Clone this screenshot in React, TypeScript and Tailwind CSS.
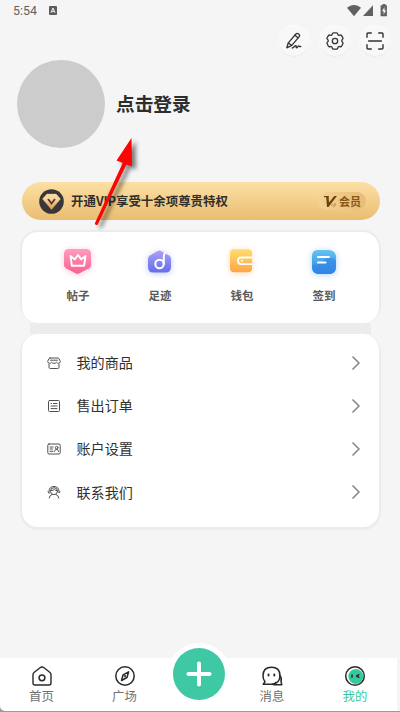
import { ReactNode } from "react";

const stroke = {
  fill: "none",
  stroke: "currentColor",
  strokeLinecap: "round" as const,
  strokeLinejoin: "round" as const,
};

function StatusBar() {
  return (
    <div className="flex h-6 items-start justify-between pl-[13px] pr-3 text-[#626262]">
      <div className="flex items-center gap-3 pt-[2px]">
        <span className="font-[Roboto] text-[12.4px] leading-[17px]">5:54</span>
        <svg width="8" height="9" viewBox="0 0 8 9">
          <rect width="8" height="9" rx="1" fill="#5c5c5c" />
          <path d="M2 6.8 4 2l2 4.8M2.8 5.3h2.4" fill="none" stroke="#f5f5f5" strokeWidth="1" />
        </svg>
      </div>
      <svg className="mt-1" width="41" height="13" viewBox="0 0 41 13" fill="#616161">
        <path d="M0 3.8C4-.1 10-.1 14 3.8L7 12.3Z" />
        <path d="M26 1.2V12H16Z" />
        <path d="M35.5 0h3v1.3h1.400v11H33.600v-11h1.900Z" />
        <path d="M37.500 2.900 35 7.200h1.600v3.300L39.100 6.200h-1.600Z" fill="#f5f5f5" />
      </svg>
    </div>
  );
}

function RoundButton({ children }: { children: ReactNode }) {
  return (
    <button className="flex size-[30px] items-center justify-center rounded-full bg-[#f8f8f8] text-[#333] shadow-[0_1px_1px_#e8e6f6,0_0_0_1px_#fcfcfc]">
      {children}
    </button>
  );
}

function TopActions() {
  return (
    <div className="flex justify-end gap-[10.5px] pr-[10px] pt-[2px]">
      <RoundButton>
        <svg width="18" height="18" viewBox="0 0 18 18" {...stroke} strokeWidth="1.300">
          <path d="M1.800 15.800 3.300 10.800 10.900 2q1.300-1.200 2.800 0 1.500 1.300.5 2.700L6.800 13.300Z" />
          <path d="m10 3.200 3.200 2.700M3.500 11l3 2.300M7.300 16c1.500-.2 2.200-2.400 3.500-2.400 1.200 0-.4 2.300.8 2.200.9 0 1.400-1.900 2.200-1.900.7 0 .5.900 2 .6" />
        </svg>
      </RoundButton>
      <RoundButton>
        <svg width="20" height="20" viewBox="0 0 20 20" {...stroke} strokeWidth="1.300">
          <path d="M7.200 3.100Q7.400 1.800 8.500 1.800h3q1.100 0 1.300 1.300.3 1.500 1.900 1.100 1.300-.5 1.900.5l1.300 2.200q.5.900-.5 1.700-1.300 1.200 0 2.500 1 .8.500 1.700l-1.300 2.300q-.6 1-1.900.5-1.600-.4-1.900 1.200-.2 1.300-1.300 1.300h-3q-1.100 0-1.300-1.300-.3-1.600-1.900-1.200-1.300.5-1.900-.5l-1.300-2.300q-.5-.9.500-1.700 1.300-1.300 0-2.500-1-.8-.5-1.700l1.300-2.200q.6-1 1.900-.5 1.600.4 1.900-1.100Z" />
          <circle cx="10" cy="10" r="2.700" />
        </svg>
      </RoundButton>
      <RoundButton>
        <svg width="18" height="18" viewBox="0 0 18 18" {...stroke} strokeWidth="1.400">
          <path d="M1 5.300V2q0-1 1-1h3.300M12.700 1H16q1 0 1 1v3.300M17 12.700V16q0 1-1 1h-3.300M5.300 17H2q-1 0-1-1v-3.300M2.600 9h12.800" />
        </svg>
      </RoundButton>
    </div>
  );
}

function VipBanner() {
  return (
    <div className="ml-[21.500px] mr-[20.500px] flex h-[38px] items-center rounded-full bg-linear-to-b from-[#fde0a5] to-[#e9bd70] pl-[17.500px] pr-[13.500px]">
      <svg width="25" height="25" viewBox="0 0 25 25">
        <defs>
          <linearGradient id="gem" x2="0" y2="1">
            <stop stopColor="#fff0d1" />
            <stop offset="1" stopColor="#dc9b54" />
          </linearGradient>
        </defs>
        <circle cx="12.500" cy="12.500" r="12.300" fill="#373737" />
        <path d="M8 5h9l4.500 5-9 10.500L3.500 10Z" fill="url(#gem)" stroke="#d49a5d" strokeWidth=".5" />
        <path d="M4 9.800 8 5h9l4 4.800H4Z" fill="#f7d6a3" />
        <path d="m9 10 3.500 4.500L16 10" fill="none" stroke="#593b22" strokeWidth="1.900" />
      </svg>
      <span className="ml-[7px] text-[12.450px] font-bold whitespace-nowrap text-[#302f2d]">
        开通VIP享受十余项尊贵特权
      </span>
      <span className="ml-auto flex h-[18px] w-[48px] items-center rounded-full bg-linear-to-r from-[#f4d294] to-[#e7bd76] pl-[6px] text-[#855815]">
        <svg width="14" height="13" viewBox="0 0 14 13">
          <path d="M0 1h5L4.700 2l.3 5.500L10.300 1H13l-.8 1L4.500 12H3L2.200 2.200H0Z" fill="#6b4309" />
          <path d="M8 8.500v2.800M10 12.500V8.800h1.500q1 1.700-1.500 1.700" fill="none" stroke="#b78b48" strokeWidth=".8" />
        </svg>
        <span className="ml-px text-[11px] font-bold whitespace-nowrap">会员</span>
      </span>
    </div>
  );
}

function PostIcon() {
  return (
    <svg className="overflow-visible drop-shadow-[0_1px_3px_#ff8eb180]" width="28" height="28" viewBox="0 0 28 28">
      <defs>
        <linearGradient id="pink" x2="0" y2="1">
          <stop stopColor="#ff9dbf" />
          <stop offset="1" stopColor="#fb5e8f" />
        </linearGradient>
      </defs>
      <path d="M5 2h17q5 0 5 5V18q0 2-2 3.200l-9.500 5q-2 1-4 0L2 21.200Q0 20 0 18V7q0-5 5-5Z" fill="url(#pink)" />
      <path d="m6.500 9 1.400 9.800h12.200L21.500 9l-4.200 3.300L14 8l-3.300 4.300Z" fill="none" stroke="#fff" strokeWidth="1.900" strokeLinejoin="round" />
    </svg>
  );
}

function FootprintIcon() {
  return (
    <svg className="overflow-visible drop-shadow-[0_1px_3px_#7a80f070]" width="28" height="28" viewBox="0 0 28 28">
      <defs>
        <linearGradient id="purple" x2="0" y2="1">
          <stop stopColor="#aaa0fa" />
          <stop offset="1" stopColor="#656de9" />
        </linearGradient>
      </defs>
      <path d="m11.800 4 q1.500-.8 3 0l8.200 4.600q2 1.200 2 3.400v8q0 5.500-5.500 5.500h-12Q2 25.500 2 20v-8q0-2.200 2-3.400Z" fill="url(#purple)" />
      <circle cx="13.500" cy="17" r="4.200" fill="none" stroke="#fff" strokeWidth="2" />
      <path d="M17.800 17V9.500q0-2.500 1.300-3.600" fill="none" stroke="#fff" strokeWidth="2" strokeLinecap="round" />
    </svg>
  );
}

function WalletIcon() {
  return (
    <svg className="overflow-visible drop-shadow-[0_1px_3px_#ffad6070]" width="28" height="28" viewBox="0 0 28 28">
      <defs>
        <linearGradient id="orange" x2="0" y2="1">
          <stop stopColor="#ffdc70" />
          <stop offset="1" stopColor="#ffa646" />
        </linearGradient>
      </defs>
      <rect x="2" y="2.200" width="22" height="23" rx="4" fill="url(#orange)" />
      <path d="M24 10.500H13q-3 0-3 3.300t3 3.300h11" fill="none" stroke="#fff" strokeWidth="1.900" />
      <circle cx="14" cy="13.800" r="1" fill="#fff" />
    </svg>
  );
}

function SignIcon() {
  return (
    <svg className="overflow-visible drop-shadow-[0_1px_3px_#4a9bee70]" width="28" height="28" viewBox="0 0 28 28">
      <defs>
        <linearGradient id="blue" x2="0" y2="1">
          <stop stopColor="#62c4ef" />
          <stop offset="1" stopColor="#3284e4" />
        </linearGradient>
      </defs>
      <path d="M8 3h10q8 0 8 8v9q0 7-7 7H9q-7 0-7-7V9q0-6 6-6Z" fill="url(#blue)" />
      <path d="M2 18q9-1 11-4 4-6 13-1v7q0 7-7 7H9q-7 0-7-7Z" fill="#3183e6" opacity=".6" />
      <path d="M8 10h11M8 15.500h7.500" stroke="#fff" strokeWidth="2.100" strokeLinecap="round" />
    </svg>
  );
}

const shortcuts = [
  { label: "帖子", icon: <PostIcon /> },
  { label: "足迹", icon: <FootprintIcon /> },
  { label: "钱包", icon: <WalletIcon /> },
  { label: "签到", icon: <SignIcon /> },
];

const menu = [
  {
    label: "我的商品",
    icon: (
      <path d="M3 2h8q.8 0 1.200 1L13.300 5.300q0 1.900-1.700 2-1.200.1-2.100-1-1 1.200-2.500 1-1.400.2-2.400-1-.9 1.100-2.200 1Q.7 7.200.7 5.300L1.800 3Q2.200 2 3 2ZM2 8.200v3q0 1.300 1.300 1.300h7.400q1.300 0 1.300-1.300v-3M3.500 4.200h7" />
    ),
  },
  {
    label: "售出订单",
    icon: (
      <>
        <rect x="1.500" y="1.500" width="11" height="11" rx="1" />
        <path d="M4 4.500h.5M6.500 4.500H10M4 7h6M4 9.600h6" />
      </>
    ),
  },
  {
    label: "账户设置",
    icon: (
      <>
        <rect x=".8" y="2" width="12.400" height="10" rx="1.200" />
        <path d="M3 5h3M3 7h2.500M3 9.300h3M7.500 9.500 9 7.200h1.200l1.300 2.300" />
        <circle cx="9.600" cy="5.700" r="1.300" />
      </>
    ),
  },
  {
    label: "联系我们",
    icon: (
      <>
        <circle cx="7" cy="6.200" r="3.500" />
        <path d="M2 8V6.300Q2.300 1.500 7 1.500T12 6.300V8l1-1.500M2 8 1 6.500M3.800 5.500Q6.500 5.600 7.500 4.500q1 1.200 2.700 1.200M2.200 13q.3-2.700 2.800-3.600M11.800 13Q11.500 10.300 9 9.400" />
      </>
    ),
  },
];

function NavItem({ label, active, children }: { label: string; active?: boolean; children: ReactNode }) {
  return (
    <div className={`flex w-[50px] flex-col items-center pt-[7px] ${active ? "text-[#36c99f]" : "text-[#707070]"}`}>
      <svg className="text-[#292929]" width="22" height="22" viewBox="0 0 22 22" {...stroke} strokeWidth="1.500">
        {children}
      </svg>
      <span className="mt-px text-[12.400px] leading-[17px]">{label}</span>
    </div>
  );
}

function BottomNav() {
  return (
    <nav className="relative h-[54px] bg-linear-to-b from-[#f5f5f5] from-[98%] to-[#9b9b9b] to-[98%]">
      <div className="absolute left-[167px] -top-[15px] size-16 rounded-full bg-white" />
      <div className="absolute bottom-0 left-0 size-2 bg-[#9b9b9b]" />
      <div className="relative mr-[3px] flex h-[53px] rounded-bl-[5px] bg-white pl-[16.500px]">
        <NavItem label="首页">
          <path d="M3 7.500 9 2.700q2-1.500 4 0l6 4.800q1 .8 1 2V18q0 2-2 2H4q-2 0-2-2V9.500q0-1.200 1-2Z" strokeWidth="1.400" />
          <circle cx="11" cy="12.800" r="2.900" />
        </NavItem>
        <div className="ml-[33px]">
          <NavItem label="广场">
            <circle cx="11" cy="11" r="9.200" />
            <path d="M14.600 6.800 13 12.500l-5.500 3 1.600-5.700Z" />
            <circle cx="11" cy="11.200" r=".4" />
          </NavItem>
        </div>
        <div className="ml-[97.500px]">
          <NavItem label="消息">
            <path d="M2.200 19.300 4 16.800Q2 14.500 2 10.800 2 2.300 10.500 2.300T19 10.800q0 7.500-8 8.500Z" />
            <path d="M18.800 10.500q2.300 2.500 1.200 5.800l.8 3.500H15q-2 0-3.500-.6M14.500 17.500v2" />
            <path d="M7.500 9.500v1M13.300 9.500v1" strokeWidth="1.900" />
          </NavItem>
        </div>
        <div className="ml-[33px]">
          <NavItem label="我的" active>
            <circle cx="11" cy="11" r="9.300" fill="#fff" />
            <circle cx="11.800" cy="11.500" r="7.500" fill="#36c99f" stroke="none" />
            <path d="M8 10v2.200M14.800 9.700 12.700 11l2.100 1.300" />
          </NavItem>
        </div>
      </div>
      <button className="absolute left-[173px] -top-[10px] flex size-[52px] items-center justify-center rounded-full bg-[#3ec9a4]">
        <svg width="26" height="26" viewBox="0 0 26 26" stroke="#fff" strokeWidth="4" strokeLinecap="round">
          <path d="M13 2.500v21M2.500 13h21" />
        </svg>
      </button>
    </nav>
  );
}

function Arrow() {
  return (
    <svg className="pointer-events-none absolute left-[90px] top-[132px] overflow-visible drop-shadow-[4px_3px_2px_#00000080]" width="50" height="96" viewBox="0 0 50 96">
      <path d="M41.500 6 26.500 28.500 33 31 5.500 91.200 7.500 92.200 36.500 32.500 42 34.500Z" fill="#fb0505" />
      <path d="M6.500 91.500 34.500 31" stroke="#fb0505" strokeWidth="3" strokeLinecap="round" />
    </svg>
  );
}

export default function App() {
  return (
    <div className="relative flex h-[712px] w-[400px] flex-col overflow-hidden bg-[#f5f5f5] font-['Noto_Sans_CJK_SC',sans-serif]">
      <StatusBar />
      <TopActions />

      <div className="mt-1 flex items-center gap-[11px] pl-[17px]">
        <div className="size-[88px] rounded-full bg-[#ccc]" />
        <h1 className="relative -top-px text-[18.700px] font-bold text-[#2d2d2d]">点击登录</h1>
      </div>

      <div className="mt-[34px]">
        <VipBanner />
      </div>

      <main className="ml-5 mr-[19px] mt-[10px] flex flex-col">
        <section className="rounded-[18px] bg-[#ececec] px-[2px] pt-[2px]">
          <div className="flex h-[91px] rounded-[16px] bg-white pl-[15px] pr-[14px]">
            {shortcuts.map((item) => (
              <div key={item.label} className="flex flex-1 flex-col items-center pt-[15px]">
                {item.icon}
                <span className="mt-[11px] text-[11.500px] leading-[18px] font-bold text-[#5a5a5a]">{item.label}</span>
              </div>
            ))}
          </div>
        </section>
        <div className="mx-[10px] h-[11px] bg-[#ececec]" />
        <section className="rounded-[18px] bg-[#ececec] px-[2px] pb-[3px]">
          <div className="h-[193px] rounded-[16px] bg-white pt-[7px]">
            {menu.map((item) => (
              <div key={item.label} className="flex h-[43.200px] items-center pl-[25px] pr-[18px]">
                <svg className="text-[#505050]" width="14" height="14" viewBox="0 0 14 14" {...stroke} strokeWidth="1">
                  {item.icon}
                </svg>
                <span className="ml-[15.500px] text-[14.100px] text-[#303030]">{item.label}</span>
                <svg className="ml-auto text-[#8b8b8b]" width="10" height="14" viewBox="0 0 10 14" {...stroke} strokeWidth="1.700">
                  <path d="m2 1 6 6-6 6" />
                </svg>
              </div>
            ))}
          </div>
        </section>
      </main>

      <div className="mt-auto">
        <BottomNav />
      </div>
      <Arrow />
    </div>
  );
}
